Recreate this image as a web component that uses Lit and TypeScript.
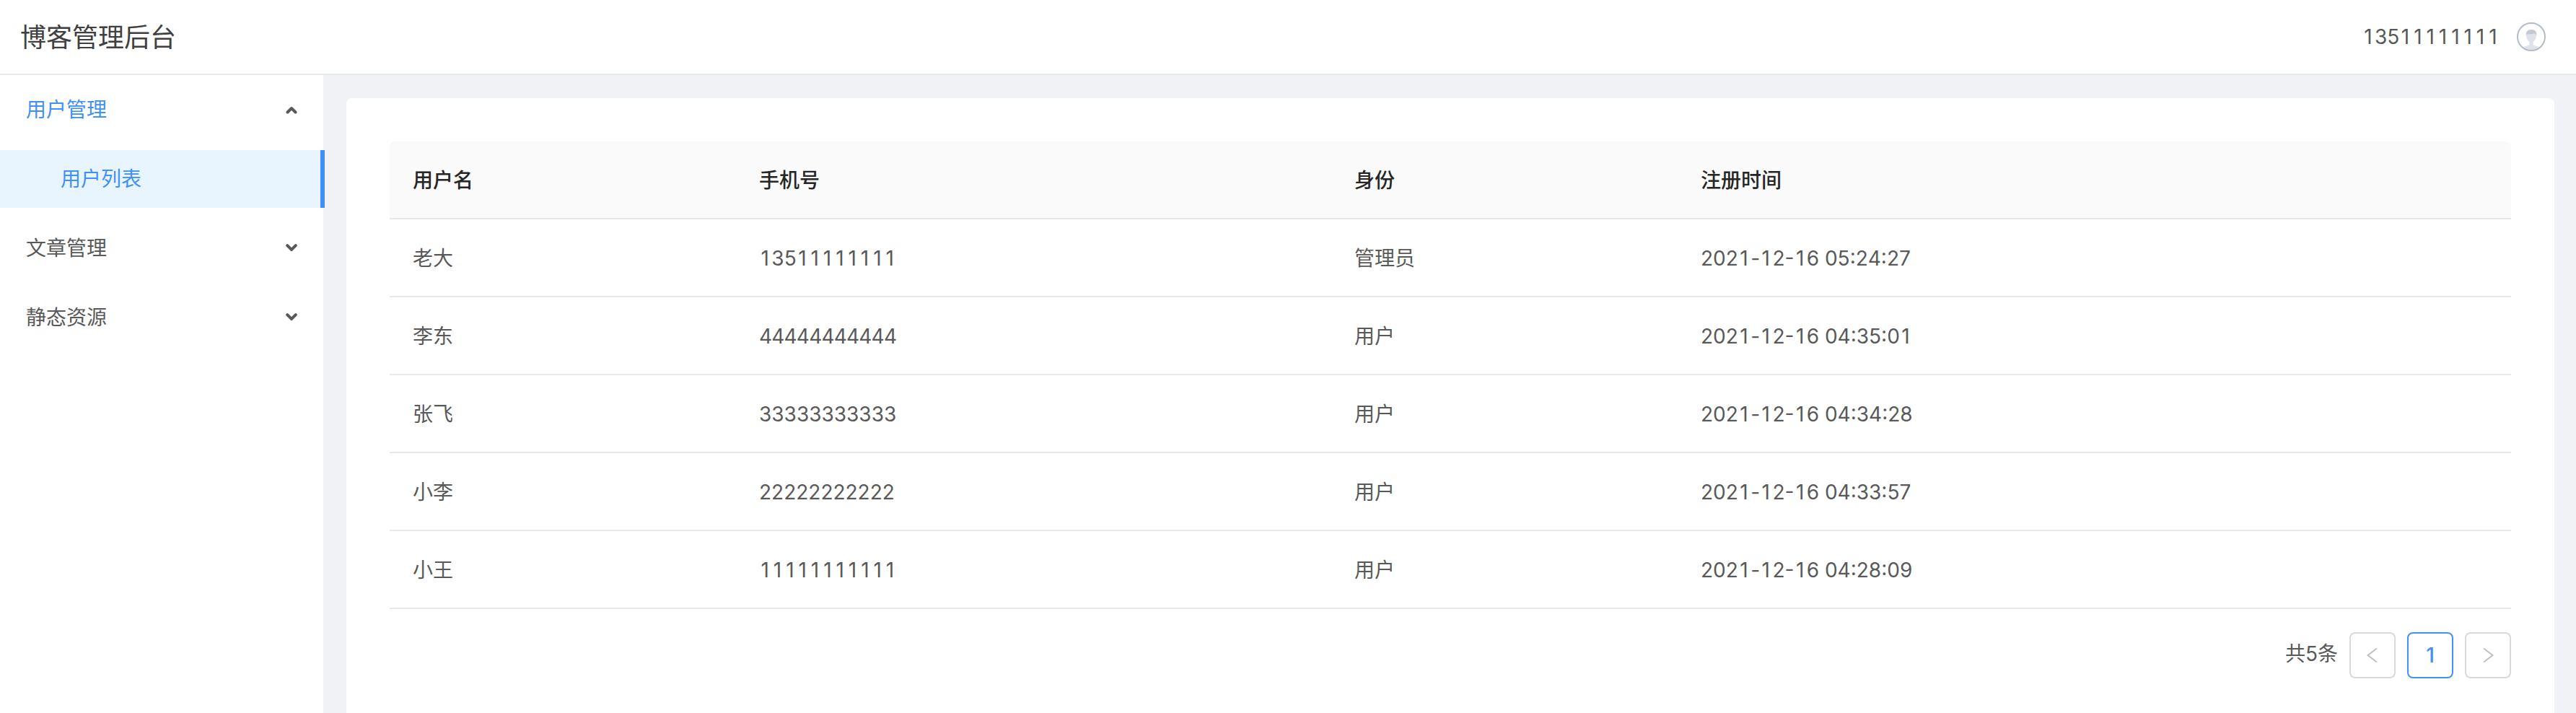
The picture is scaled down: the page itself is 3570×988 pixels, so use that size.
import { LitElement, html, css, svg } from 'lit'
import { customElement, property, state } from 'lit/decorators.js'
import { classMap } from 'lit/directives/class-map.js'

interface User {
	name: string
	phone: string
	role: string
	createdAt: string
}

interface MenuGroup {
	title: string
	children: string[]
}

const MENU: MenuGroup[] = [
	{ title: '用户管理', children: ['用户列表'] },
	{ title: '文章管理', children: [] },
	{ title: '静态资源', children: [] },
]

const USERS: User[] = [
	{ name: '老大', phone: '13511111111', role: '管理员', createdAt: '2021-12-16 05:24:27' },
	{ name: '李东', phone: '44444444444', role: '用户', createdAt: '2021-12-16 04:35:01' },
	{ name: '张飞', phone: '33333333333', role: '用户', createdAt: '2021-12-16 04:34:28' },
	{ name: '小李', phone: '22222222222', role: '用户', createdAt: '2021-12-16 04:33:57' },
	{ name: '小王', phone: '11111111111', role: '用户', createdAt: '2021-12-16 04:28:09' },
]

// Inter's tabular "1" has a foot, so the plain one is spaced out to the width
// of the other digits instead
const digitStyles = css`
	.digits {
		font-kerning: none;
		white-space: nowrap;
	}

	.ones {
		margin: 0 -2.5px 0 2.5px;
		letter-spacing: 5.94px;
	}

	.fours {
		letter-spacing: -0.8px;
	}
`

const digits = (text: string) =>
	text.split(/(1+|4{2,})/).map((part) => {
		if (part[0] === '1') return html`<span class="ones">${part}</span>`
		if (part.startsWith('44')) return html`<span class="fours">${part}</span>`
		return part
	})

@customElement('app-header')
export class AppHeader extends LitElement {
	static styles = [digitStyles, css`
		:host {
			box-sizing: border-box;
			display: flex;
			align-items: center;
			justify-content: space-between;
			height: 104px;
			padding: 0 42px 0 28px;
			border-bottom: 2px solid #e8e8e8;
			background: #fff;
		}

		.title {
			margin: 0;
			padding-top: 2px;
			color: #404040;
			font-size: 36px;
			font-weight: 400;
			line-height: 56px;
		}

		.account {
			display: flex;
			align-items: center;
			gap: 24px;
		}

		.avatar {
			display: block;
			width: 40px;
			height: 40px;
		}
	`]

	@property() phone = ''

	render() {
		return html`
			<h1 class="title">博客管理后台</h1>
			<div class="account">
				<span class="digits">${digits(this.phone)}</span>
				<svg class="avatar" viewBox="0 0 40 40">
					<path d="M8.500 34.600c2-1.700 8.200-1.900 8.900-4.100v-3.500c-3.200-2-4.400-5.500-4.400-11h14c0 5.500-1.200 9-4.400 11v3.500c.7 2.200 6.900 2.400 8.900 4.100-5.500 5-17.500 5-23 0z" fill="#dfe2e9" />
					<path d="M12.900 18.500c-.7-5.500 1.600-8.500 7.100-8.500s7.900 3 7.100 8.500c-.8-1.900-1.700-2.900-3.600-3.100-3.200 1.300-6.600.7-8.600.8-.9.400-1.500 1.100-2 2.300z" fill="#c3c9d0" />
					<circle cx="20" cy="20" r="19" fill="none" stroke="#b4bcc8" stroke-width="2" />
				</svg>
			</div>
		`
	}
}

@customElement('side-menu')
export class SideMenu extends LitElement {
	static styles = css`
		:host {
			display: block;
			width: 448px;
			background: #fff;
		}

		.menu {
			display: flex;
			flex-direction: column;
			gap: 16px;
			padding-top: 8px;
		}

		.group {
			display: flex;
			align-items: center;
			justify-content: space-between;
			height: 80px;
			padding: 0 36px;
			cursor: pointer;
		}

		.group.open .label {
			color: #4090f7;
		}

		.arrow {
			display: block;
			width: 16px;
			height: 12px;
			fill: none;
			stroke: #595959;
			stroke-width: 4;
			stroke-linecap: round;
			stroke-linejoin: round;
		}

		.item {
			box-sizing: border-box;
			width: 450px;
			height: 80px;
			padding-left: 84px;
			border-right: 6px solid #4090f7;
			background: #e8f5fe;
			color: #4090f7;
			line-height: 80px;
		}
	`

	@state() private open = 0

	render() {
		return html`<nav class="menu">
			${MENU.map((group, i) => html`
				<div class=${classMap({ group: true, open: i === this.open })} @click=${() => (this.open = i)}>
					<span class="label">${group.title}</span>
					<svg class="arrow" viewBox="0 0 16 12">
						${i === this.open
							? svg`<path d="M2.500 9.500L8 4l5.500 5.500" />`
							: svg`<path d="M2.200 2.200L8 8l5.800-5.800" />`}
					</svg>
				</div>
				${i === this.open ? group.children.map((child) => html`<div class="item">${child}</div>`) : ''}
			`)}
		</nav>`
	}
}

@customElement('user-table')
export class UserTable extends LitElement {
	static styles = [digitStyles, css`
		:host {
			display: block;
		}

		.table {
			width: 100%;
			border-collapse: separate;
			border-spacing: 0;
			table-layout: fixed;
		}

		.name,
		.role {
			width: 480px;
		}

		.phone {
			width: 825px;
		}

		th,
		td {
			box-sizing: border-box;
			height: 108px;
			padding: 2px 32px 0;
			border-bottom: 2px solid #e8e8e8;
			text-align: left;
		}

		th {
			background: #fafafa;
			color: #262626;
			font-weight: 500;
		}

		th:first-child {
			border-top-left-radius: 8px;
		}

		th:last-child {
			border-top-right-radius: 8px;
		}
	`]

	@property({ attribute: false }) users: User[] = []

	render() {
		return html`<table class="table">
			<thead>
				<tr>
					<th class="name">用户名</th>
					<th class="phone">手机号</th>
					<th class="role">身份</th>
					<th>注册时间</th>
				</tr>
			</thead>
			<tbody>
				${this.users.map((user) => html`<tr>
					<td>${user.name}</td>
					<td class="digits">${digits(user.phone)}</td>
					<td>${user.role}</td>
					<td class="digits">${digits(user.createdAt)}</td>
				</tr>`)}
			</tbody>
		</table>`
	}
}

@customElement('page-nav')
export class PageNav extends LitElement {
	static styles = css`
		:host {
			display: flex;
			justify-content: flex-end;
			gap: 16px;
		}

		.total {
			line-height: 60px;
		}

		.page {
			box-sizing: border-box;
			display: flex;
			align-items: center;
			justify-content: center;
			width: 64px;
			height: 64px;
			border: 2px solid #d9d9d9;
			border-radius: 8px;
			background: #fff;
		}

		.current {
			border-color: #4090f7;
			color: #4090f7;
			font-weight: 500;
		}

		.icon {
			display: block;
			width: 24px;
			height: 24px;
			fill: none;
			stroke: #bfbfbf;
			stroke-width: 2;
		}
	`

	@property({ type: Number }) total = 0

	render() {
		return html`
			<span class="total">共${this.total}条</span>
			<span class="page">
				<svg class="icon" viewBox="0 0 24 24"><path d="M18 2.500L5.500 12 18 21.500" /></svg>
			</span>
			<span class="page current">1</span>
			<span class="page">
				<svg class="icon" viewBox="0 0 24 24"><path d="M6 2.500L18.500 12 6 21.500" /></svg>
			</span>
		`
	}
}

@customElement('app-root')
export class AppRoot extends LitElement {
	static styles = css`
		:host {
			display: flex;
			flex-direction: column;
			height: 988px;
			overflow: hidden;
			background: #f0f2f5;
			color: #595959;
			font-family: Inter, "Noto Sans CJK SC", sans-serif;
			font-size: 28px;
			line-height: 44px;
		}

		.body {
			display: flex;
			flex: 1;
		}

		side-menu {
			flex: none;
		}

		.content {
			flex: 1;
			margin: 32px 30px 0 32px;
			padding: 60px 60px 0;
			border-radius: 8px 8px 0 0;
			background: #fff;
		}

		page-nav {
			margin-top: 32px;
		}
	`

	render() {
		return html`
			<app-header phone="13511111111"></app-header>
			<div class="body">
				<side-menu></side-menu>
				<main class="content">
					<user-table .users=${USERS}></user-table>
					<page-nav total=${USERS.length}></page-nav>
				</main>
			</div>
		`
	}
}
